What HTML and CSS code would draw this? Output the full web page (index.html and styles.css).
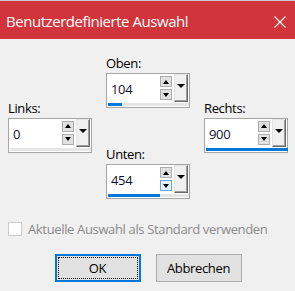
FILE: index.html
```html
<!DOCTYPE html>
<html lang="de">
<head>
<meta charset="utf-8">
<title>Benutzerdefinierte Auswahl</title>
<link rel="stylesheet" href="styles.css">
</head>
<body>
<div class="window">
  <div class="titlebar">
    <span class="title">Benutzerdefinierte Auswahl</span>
    <svg class="close" width="12" height="12" viewBox="0 0 12 12"><path d="M0.5 0.5 L11.5 11.5 M11.5 0.5 L0.5 11.5" stroke="#fff" stroke-width="1.1" fill="none"/></svg>
  </div>
  <div class="content">
    <div class="grid">
      <div class="col side">
        <div class="field">
          <div class="label">Links:</div>
          <div class="spin">
            <div class="spin-row">
              <span class="value">0</span>
              <div class="arrows"><span class="arr up"></span><span class="arr down"></span></div>
              <span class="drop"></span>
            </div>
            <div class="track"><div class="fill" style="width:0px"></div></div>
          </div>
        </div>
      </div>
      <div class="col middle">
        <div class="field">
          <div class="label">Oben:</div>
          <div class="spin">
            <div class="spin-row">
              <span class="value">104</span>
              <div class="arrows"><span class="arr up"></span><span class="arr down"></span></div>
              <span class="drop"></span>
            </div>
            <div class="track"><div class="fill" style="width:14px"></div></div>
          </div>
        </div>
        <div class="field">
          <div class="label">Unten:</div>
          <div class="spin">
            <div class="spin-row">
              <span class="value">454</span>
              <div class="arrows"><span class="arr up"></span><span class="arr down hover"></span></div>
              <span class="drop"></span>
            </div>
            <div class="track"><div class="fill" style="width:52px"></div></div>
          </div>
        </div>
      </div>
      <div class="col side">
        <div class="field">
          <div class="label">Rechts:</div>
          <div class="spin">
            <div class="spin-row">
              <span class="value">900</span>
              <div class="arrows"><span class="arr up"></span><span class="arr down"></span></div>
              <span class="drop"></span>
            </div>
            <div class="track"><div class="fill" style="width:82px"></div></div>
          </div>
        </div>
      </div>
    </div>
    <label class="check-row">
      <span class="checkbox"></span>
      <span class="check-text">Aktuelle Auswahl als Standard verwenden</span>
    </label>
    <div class="buttons">
      <button class="btn default"><span class="focus">OK</span></button>
      <button class="btn">Abbrechen</button>
    </div>
  </div>
</div>
</body>
</html>
```

FILE: styles.css
```css
html, body {
  margin: 0;
  padding: 0;
}
body {
  width: 295px;
  height: 291px;
  background: #f0f0f0;
  font-family: "Open Sans", "Noto Sans", sans-serif;
  font-size: 13px;
  letter-spacing: -0.35px;
  color: #000;
  overflow: hidden;
}
.window {
  width: 295px;
  height: 291px;
  display: flex;
  flex-direction: column;
}
.titlebar {
  height: 38px;
  border-top: 1px solid #c8c8c8;
  background: #d1343a;
  display: flex;
  align-items: center;
  padding-left: 6px;
  padding-right: 9px;
  color: #fff;
}
.title {
  flex: 1;
  font-size: 15px;
  letter-spacing: -0.45px;
  margin-top: 1px;
}
.close {
  display: block;
  margin-top: 3px;
}
.content {
  padding-top: 16px;
}
.grid {
  display: grid;
  grid-template-columns: 84px 84px 84px;
  column-gap: 14px;
  padding-left: 8px;
}
.col {
  display: flex;
  flex-direction: column;
}
.side {
  justify-content: center;
  padding-bottom: 2px;
}
.middle {
  gap: 38px;
}
.field {
  display: flex;
  flex-direction: column;
  gap: 2px;
}
.label {
  height: 16px;
  line-height: 16px;
  white-space: nowrap;
}
.spin {
  width: 84px;
  height: 35px;
  box-sizing: border-box;
  border: 1px solid #a6a6a6;
  background: #fff;
  display: flex;
  flex-direction: column;
}
.spin-row {
  flex: 1;
  display: flex;
  align-items: flex-start;
}
.value {
  flex: 1;
  align-self: center;
  padding-left: 4px;
  padding-top: 1px;
  line-height: 16px;
  color: #101030;
}
.arrows {
  display: flex;
  flex-direction: column;
  gap: 2px;
  margin-top: 2px;
  width: 12px;
}
.arr {
  display: flex;
  align-items: center;
  justify-content: center;
  height: 11px;
  box-sizing: border-box;
  background: #e1e1e1;
  border: 1px solid #adadad;
}
.arr::before {
  content: "";
  width: 0;
  height: 0;
  border-left: 3px solid transparent;
  border-right: 3px solid transparent;
}
.arr.up::before {
  border-bottom: 4px solid #000;
}
.arr.down::before {
  border-top: 4px solid #000;
}
.arr.hover {
  background: #e5f1fb;
  border-color: #6aa9e0;
}
.drop {
  width: 14px;
  height: 28px;
  box-sizing: border-box;
  margin-left: 2px;
  margin-right: 1px;
  background: #f0f0f0;
  border: 1px solid;
  border-color: #e3e3e3 #696969 #696969 #e3e3e3;
  box-shadow: inset -1px -1px #a0a0a0;
  display: flex;
  justify-content: center;
  padding-top: 9px;
}
.drop::before {
  content: "";
  width: 0;
  height: 0;
  border-left: 4px solid transparent;
  border-right: 4px solid transparent;
  border-top: 4px solid #000;
}
.track {
  height: 3px;
  background: #e6e6e6;
  margin: 0 0 1px 1px;
}
.fill {
  height: 3px;
  background: #0078d7;
}
.check-row {
  display: flex;
  align-items: center;
  gap: 6px;
  margin-top: 22px;
  padding-left: 8px;
  height: 15px;
}
.checkbox {
  width: 14px;
  height: 14px;
  box-sizing: border-box;
  border: 1px solid #cccccc;
  background: #fff;
}
.check-text {
  color: #8a8a8a;
  white-space: nowrap;
}
.buttons {
  display: flex;
  justify-content: center;
  gap: 15px;
  margin-top: 18px;
  padding-left: 1px;
}
.btn {
  width: 86px;
  height: 28px;
  box-sizing: border-box;
  background: #e1e1e1;
  border: 1px solid #adadad;
  font-family: inherit;
  font-size: 13px;
  letter-spacing: -0.35px;
  color: #000;
  padding: 0;
  display: flex;
  align-items: center;
  justify-content: center;
}
.btn.default {
  border: 2px solid #0078d7;
  padding: 1px;
}
.focus {
  flex: 1;
  align-self: stretch;
  border: 1px dotted #000;
  display: flex;
  align-items: center;
  justify-content: center;
}
```
